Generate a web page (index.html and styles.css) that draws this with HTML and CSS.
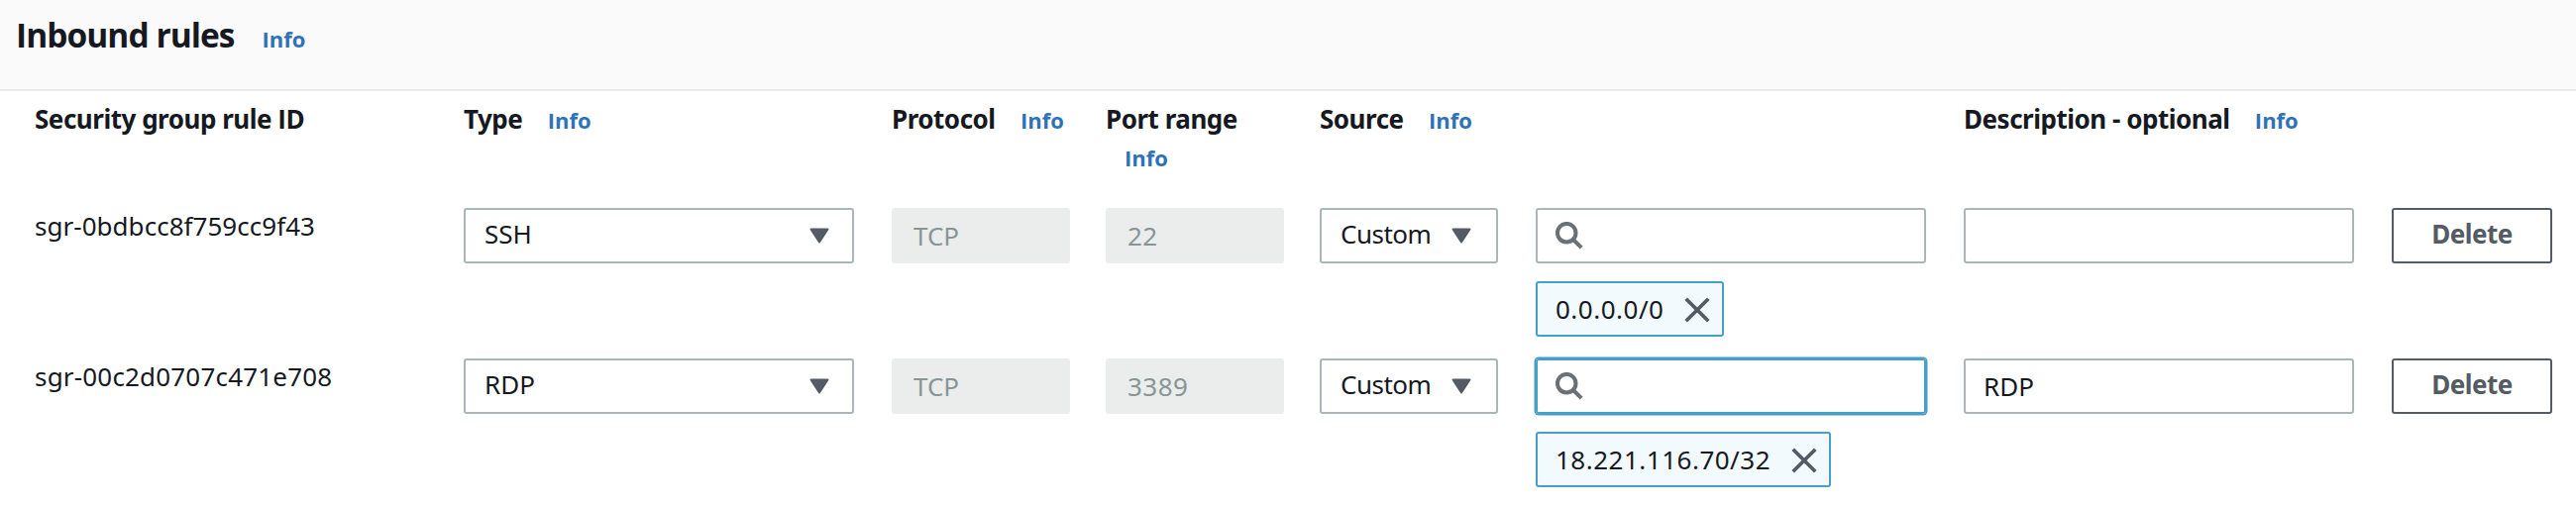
FILE: index.html
```html
<!DOCTYPE html>
<html lang="en">
<head>
<meta charset="utf-8">
<title>Inbound rules</title>
<link rel="stylesheet" href="styles.css">
</head>
<body>
<svg class="sprite" aria-hidden="true">
  <symbol id="caret" viewBox="0 0 20 16"><path d="M1.5 1.5h17L10 14.5z" fill="currentColor" stroke="currentColor" stroke-width="2" stroke-linejoin="round"/></symbol>
  <symbol id="search" viewBox="0 0 28 28"><g fill="none" stroke="currentColor" stroke-width="4"><circle cx="11.2" cy="11.2" r="9.3"/><path d="M17.8 17.8l8.4 8.4"/></g></symbol>
  <symbol id="close" viewBox="0 0 26 26"><path d="M1.7 1.7l22.6 22.6M24.3 1.7L1.7 24.3" fill="none" stroke="currentColor" stroke-width="3.7"/></symbol>
</svg>
<header class="panel-header">
  <h2 class="title">Inbound rules</h2>
  <a class="info">Info</a>
</header>
<main class="rules">
  <div class="grid labels">
    <div class="label">Security group rule <span class="plain-i">ID</span></div>
    <div class="label">Type <a class="info">Info</a></div>
    <div class="label label-short">Protocol <a class="info">Info</a></div>
    <div class="label label-short">Port range <a class="info">Info</a></div>
    <div class="label label-wide">Source <a class="info">Info</a></div>
    <div class="label">Description - optional <a class="info">Info</a></div>
  </div>

  <div class="grid rule">
    <div class="rule-id">sgr-0bdbcc8f759cc9f43</div>
    <div class="control select">SSH<svg class="caret"><use href="#caret"/></svg></div>
    <div class="control short disabled">TCP</div>
    <div class="control short disabled digits">22</div>
    <div class="control short select source">Custom<svg class="caret"><use href="#caret"/></svg></div>
    <div class="lookup">
      <div class="control search"><svg class="search-icon"><use href="#search"/></svg></div>
      <div class="token digits">0.0.0.0/0<svg class="close"><use href="#close"/></svg></div>
    </div>
    <div class="control"></div>
    <button class="delete">Delete</button>
  </div>

  <div class="grid rule">
    <div class="rule-id spaced">sgr-00c2d0707c471e708</div>
    <div class="control select">RDP<svg class="caret"><use href="#caret"/></svg></div>
    <div class="control short disabled">TCP</div>
    <div class="control short disabled digits">3389</div>
    <div class="control short select source">Custom<svg class="caret"><use href="#caret"/></svg></div>
    <div class="lookup">
      <div class="control search focused"><svg class="search-icon"><use href="#search"/></svg></div>
      <div class="token digits">18.221.116.70/32<svg class="close"><use href="#close"/></svg></div>
    </div>
    <div class="control">RDP</div>
    <button class="delete">Delete</button>
  </div>
</main>
</body>
</html>
```
FILE: styles.css
```css
* { box-sizing: border-box; }

body {
  margin: 0;
  background: #fff;
  color: #16191f;
  font: 26px/38px "Noto Sans", "Open Sans", sans-serif;
  overflow: hidden;
}

.sprite { display: none; }

.panel-header {
  display: flex;
  align-items: baseline;
  height: 92px;
  padding: 15px 0 0 16px;
  background: #fafafa;
  border-bottom: 2px solid #eaeaea;
}

.title {
  margin: 0;
  font: 700 33.5px/40px "Open Sans", sans-serif;
  letter-spacing: -0.95px;
}

.info {
  display: inline-block;
  margin-left: 19px;
  color: #2e72b9;
  font: 700 22px/38px "Open Sans", sans-serif;
  letter-spacing: 0;
}

.panel-header .info { margin-left: 28px; }

.rules { padding-left: 35px; }

.grid {
  display: grid;
  grid-template-columns: 433px 432px 216px 216px 218px 432px 432px 162px;
  align-items: start;
}

.labels { height: 118px; padding-top: 9px; }

.label {
  font-weight: 700;
  letter-spacing: -0.48px;
}

.label-short { width: 180px; }
.label-wide { grid-column: span 2; }
.plain-i { font-family: "Open Sans", sans-serif; }

.rule { height: 152px; }

.rule-id { line-height: 36px; letter-spacing: 0.03px; }
.spaced { letter-spacing: 0.18px; }

.control {
  display: flex;
  align-items: center;
  width: 394px;
  height: 56px;
  padding: 0 18px;
  border: 2px solid #aab7b8;
  border-radius: 3px;
}

.short { width: 180px; }

.select {
  justify-content: space-between;
  padding: 0 23px 4px 19px;
}

.source {
  padding-right: 25px;
  letter-spacing: -0.5px;
}

.disabled {
  padding-left: 20px;
  border-color: #eaedec;
  background: #eaedec;
  color: #879596;
}

.digits { letter-spacing: 0.5px; }

.caret { width: 20px; height: 16px; margin-top: 3px; color: #545b64; }

.search-icon { width: 28px; height: 28px; margin-top: -1px; color: #687078; }

.focused {
  border-color: #469fc6;
  box-shadow: 0 0 0 1.5px #469fc6;
}

.lookup {
  display: flex;
  flex-direction: column;
  align-items: flex-start;
  gap: 18px;
}

.token {
  display: flex;
  align-items: center;
  gap: 21px;
  height: 56px;
  padding: 0 12px 0 18px;
  border: 2px solid #469fc6;
  border-radius: 3px;
  background: #f2fafd;
}

.close { width: 26px; height: 26px; margin-top: 2px; color: #545b64; }

.delete {
  width: 162px;
  height: 56px;
  padding: 0 0 4px;
  border: 2px solid #545b64;
  border-radius: 3px;
  background: #fff;
  color: #545b64;
  font: 700 26px/38px "Noto Sans", sans-serif;
  letter-spacing: -0.5px;
}
```
